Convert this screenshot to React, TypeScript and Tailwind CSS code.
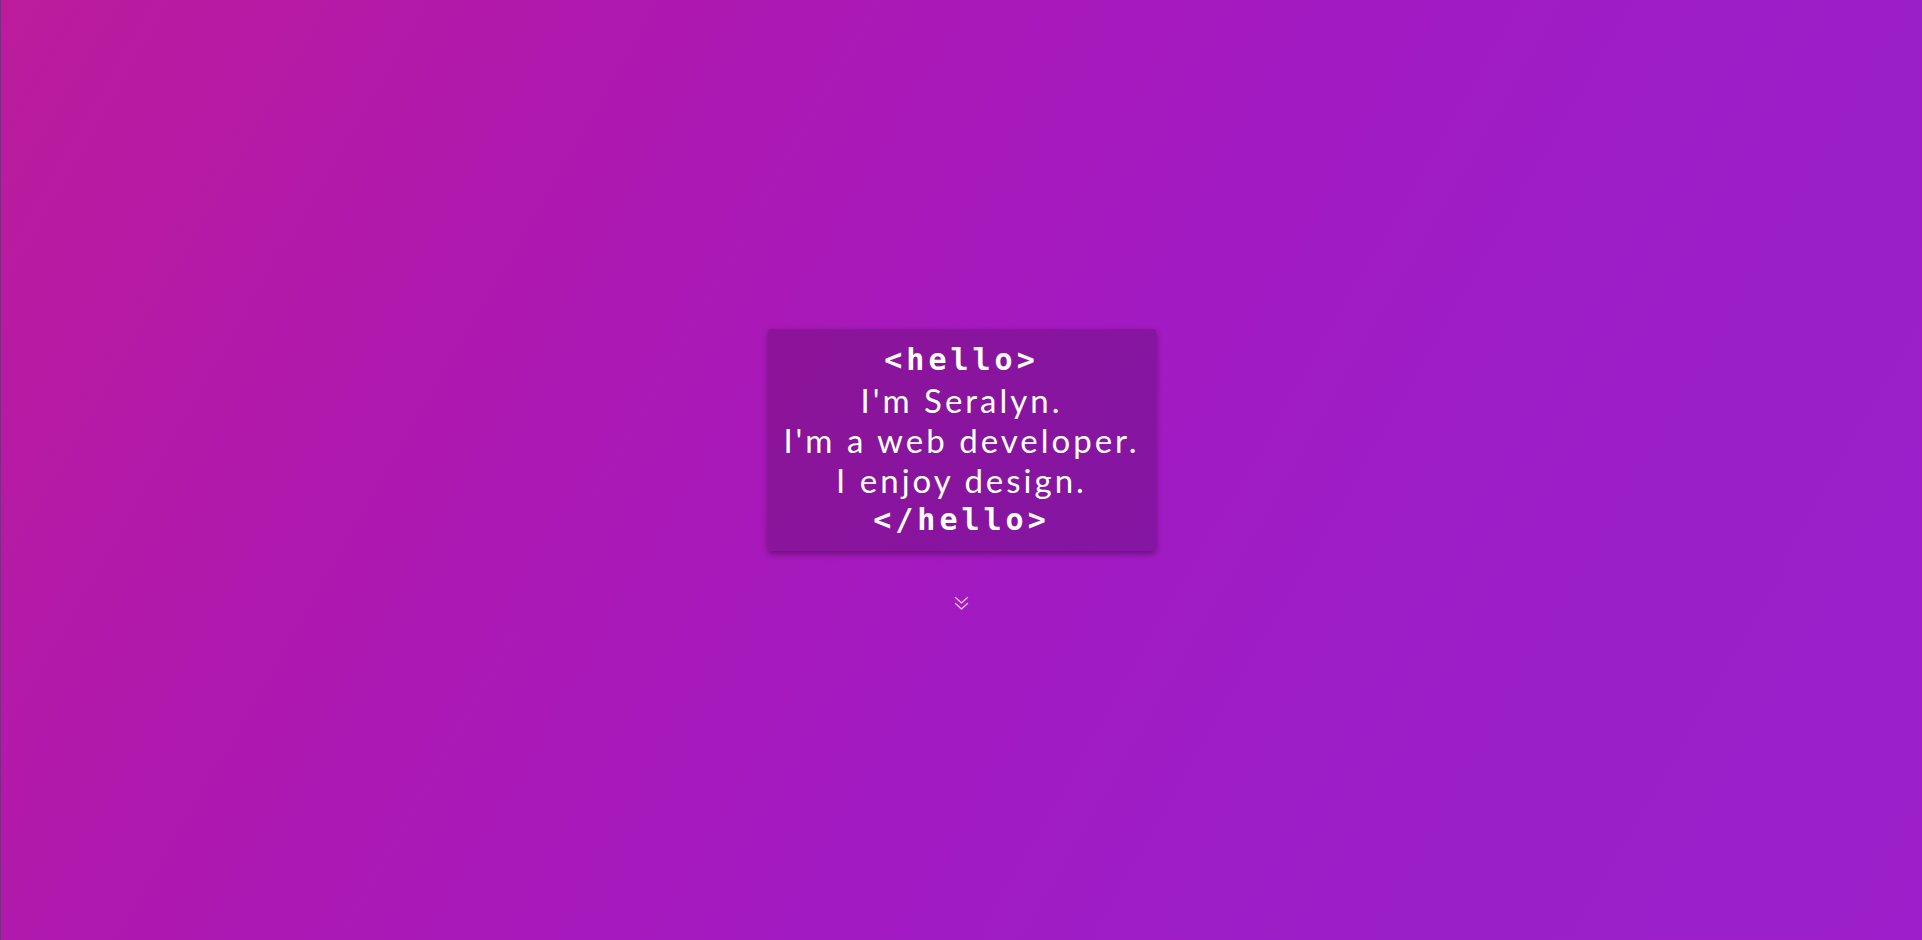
import React from "react";

export default function App() {
  const body = "font-['Lato',sans-serif] font-normal text-[33px] tracking-[3px]";
  const mono = "font-['DejaVu_Sans_Mono',monospace] font-bold text-[30px] tracking-[4px]";
  return (
    <div className="w-full h-[940px] overflow-hidden border-l border-[#7e2b86] bg-[linear-gradient(120deg,#bc1c9c_0%,#ad18b2_30%,#a21ac2_55%,#9b1fc9_78%,#9c1fcb_100%)] flex flex-col items-center justify-center">
      <div className="w-[388px] rounded-[3px] bg-black/[0.17] shadow-[0_3px_6px_rgba(0,0,0,0.35)] py-[11px] text-center text-white leading-[40px] whitespace-nowrap">
        <div className={mono}>&lt;hello&gt;</div>
        <div className={body}>I'm Seralyn.</div>
        <div className={body}>I'm a web developer.</div>
        <div className={body}>I enjoy design.</div>
        <div className={mono}>&lt;/hello&gt;</div>
      </div>
      <div className="mt-[44px] h-[16px] flex items-center justify-center">
        <svg width="15" height="15" viewBox="0 0 15 15" fill="none" stroke="#f6b8f4" strokeWidth="1.4" strokeLinecap="round" strokeLinejoin="round">
          <polyline points="1.5,1.5 7.5,7 13.5,1.5" />
          <polyline points="1.5,7.5 7.5,13 13.5,7.5" />
        </svg>
      </div>
    </div>
  );
}
